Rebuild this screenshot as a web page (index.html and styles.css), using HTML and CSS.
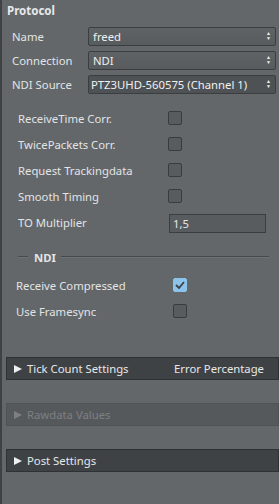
FILE: index.html
```html
<!DOCTYPE html>
<html lang="en">
  <head>
    <meta charset="UTF-8" />
    <title>Protocol</title>
    <link rel="stylesheet" href="styles.css">
  </head>
  <body>
    <div class="panel">
      <h3 class="title">Protocol</h3>

      <div class="field">
        <label>Name</label>
        <div class="select">freed<span class="arrows">&#9650;<br>&#9660;</span></div>
      </div>
      <div class="field">
        <label>Connection</label>
        <div class="select">NDI<span class="arrows">&#9650;<br>&#9660;</span></div>
      </div>
      <div class="field">
        <label>NDI Source</label>
        <div class="select dark">PTZ3UHD-560575 (Channel 1)<span class="arrows">&#9650;<br>&#9660;</span></div>
      </div>

      <div class="checks">
        <div class="check-row"><span>ReceiveTime Corr.</span><span class="box"></span></div>
        <div class="check-row"><span>TwicePackets Corr.</span><span class="box"></span></div>
        <div class="check-row"><span>Request Trackingdata</span><span class="box"></span></div>
        <div class="check-row"><span>Smooth Timing</span><span class="box"></span></div>
        <div class="check-row"><span>TO Multiplier</span><span class="num">1,5</span></div>
      </div>

      <div class="group-title"><span>NDI</span></div>

      <div class="checks ndi">
        <div class="check-row"><span>Receive Compressed</span>
          <span class="box checked">
            <svg width="10" height="8" viewBox="0 0 10 8"><path d="M1 4 L4 7 L9 1" fill="none" stroke="#3d4146" stroke-width="1.8"/></svg>
          </span>
        </div>
        <div class="check-row"><span>Use Framesync</span><span class="box"></span></div>
      </div>

      <div class="bars">
        <div class="bar"><span class="tri"></span>Tick Count Settings<span class="extra">Error Percentage</span></div>
        <div class="bar disabled"><span class="tri"></span>Rawdata Values</div>
        <div class="bar"><span class="tri"></span>Post Settings</div>
      </div>
    </div>
  </body>
</html>
```

FILE: styles.css
```css
body {
  margin: 0;
  background-color: #63676a;
  font-family: "Noto Sans", "Open Sans", sans-serif;
  font-size: 11.3px;
  color: #e2e4e5;
}
.panel {
  height: 504px;
  border-left: 2px solid #3f4244;
  box-sizing: border-box;
}
.title {
  margin: 0;
  padding: 3px 0 0 5px;
  height: 19px;
  font-size: 11.5px;
  font-weight: bold;
  color: #e8e9ea;
}
.field {
  display: flex;
  align-items: center;
  height: 19px;
  margin: 5px 0 0 10px;
}
.field label {
  width: 76px;
}
.select {
  position: relative;
  flex: 1;
  height: 17px;
  line-height: 17px;
  margin-right: 3px;
  padding-left: 4px;
  border: 1px solid #3b3e41;
  border-radius: 2px;
  background: linear-gradient(#5f6366, #575b5e);
  color: #eef0f1;
}
.select.dark {
  background: #4e5255;
  padding-left: 2px;
}
.arrows {
  position: absolute;
  right: 4px;
  top: 3px;
  font-size: 5px;
  line-height: 5px;
  text-align: center;
}
.checks {
  margin: 11px 0 0 16px;
}
.check-row {
  display: flex;
  align-items: center;
  height: 26px;
}
.check-row span:first-child {
  width: 150px;
}
.box {
  width: 12px;
  height: 12px;
  border: 1px solid #393c3f;
  border-radius: 2px;
  background: #585c5f;
  display: flex;
  align-items: center;
  justify-content: center;
}
.box.checked {
  background: #8cc3ea;
  border-color: #8cc3ea;
}
.num {
  width: 92px;
  height: 17px;
  line-height: 17px;
  padding-left: 3px;
  border: 1px solid #3b3e41;
  background: #585c5f;
  margin-left: 1px;
  margin-top: 2px;
}
.group-title {
  display: flex;
  align-items: center;
  margin: 12px 10px 0 16px;
  height: 20px;
  font-weight: bold;
}
.group-title::before,
.group-title::after {
  content: "";
  height: 1px;
  background: #474a4d;
  border-bottom: 1px solid #6f7376;
}
.group-title::before {
  width: 10px;
  margin-right: 6px;
}
.group-title::after {
  flex: 1;
  margin-left: 5px;
}
.checks.ndi {
  margin: 5px 0 0 14px;
}
.checks.ndi .check-row span:first-child {
  width: 157px;
}
.bars {
  margin: 33px 0 0 4px;
}
.bar {
  display: flex;
  align-items: center;
  height: 21px;
  margin-bottom: 23px;
  padding-left: 7px;
  border: 1px solid #2f3234;
  background: #3f4245;
  color: #e6e8e9;
}
.bar.disabled {
  background: #56595c;
  border-color: #505356;
  color: #7c8083;
}
.tri {
  width: 0;
  height: 0;
  border-left: 8px solid #eef0f1;
  border-top: 4.5px solid transparent;
  border-bottom: 4.5px solid transparent;
  margin-right: 5px;
}
.bar.disabled .tri {
  border-left-color: #7c8083;
}
.extra {
  margin-left: auto;
  margin-right: 14px;
}
```
